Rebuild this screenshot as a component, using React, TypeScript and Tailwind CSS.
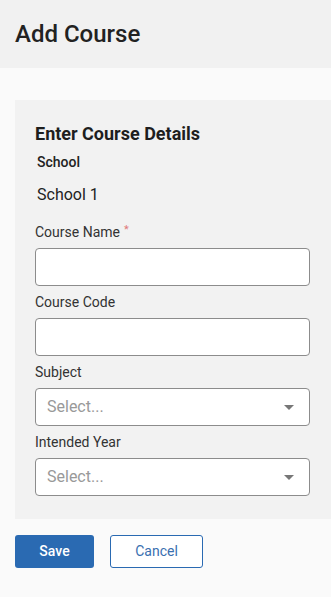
import React from 'react';

const font = { fontFamily: 'Roboto, "Liberation Sans", sans-serif' };

function Field({ label, required, children }: { label: string; required?: boolean; children: React.ReactNode }) {
  return (
    <div className="mb-[6px]">
      <div className="mb-[6px] h-5 text-[14px] leading-5 text-[#333]">
        {label}
        {required && <span className="ml-1 align-top text-[11px] leading-4 text-[#e07a7a]">*</span>}
      </div>
      {children}
    </div>
  );
}

function TextBox() {
  return <input type="text" className="block h-[38px] w-full rounded-[4px] border border-[#8c8c8c] bg-white px-[11px] text-[16px] outline-none" />;
}

function SelectBox() {
  return (
    <div className="flex h-[38px] w-full items-center justify-between rounded-[4px] border border-[#8c8c8c] bg-white pl-[11px] pr-[15px]">
      <span className="text-[16px] text-[#999]">Select...</span>
      <svg width="10" height="5" viewBox="0 0 10 5">
        <path d="M0 0h10L5 5z" fill="#777" />
      </svg>
    </div>
  );
}

export default function App() {
  return (
    <div className="min-h-[597px] bg-[#fafafa]" style={font}>
      {/* Header */}
      <header className="flex h-[68px] items-center bg-[#f1f1f1] px-[15px]">
        <h1 className="text-[24px] font-medium text-[#222]">Add Course</h1>
      </header>

      <main className="pt-8">
        <section className="ml-[15px] bg-[#f2f2f2] pb-[17px] pl-5 pr-[21px] pt-[22px]">
          <h2 className="h-6 text-[18px] font-bold leading-6 text-[#1e1e1e]">Enter Course Details</h2>
          <div className="mt-[7px] h-[18px] pl-[2px] text-[14px] font-medium leading-[18px] text-[#222]">School</div>
          <div className="mt-3 h-6 pl-[2px] text-[16px] leading-6 text-[#222]">School 1</div>

          <div className="mt-[15px]">
            <Field label="Course Name" required>
              <TextBox />
            </Field>
            <Field label="Course Code">
              <TextBox />
            </Field>
            <Field label="Subject">
              <SelectBox />
            </Field>
            <Field label="Intended Year">
              <SelectBox />
            </Field>
          </div>
        </section>

        <div className="mt-4 flex gap-4 px-[15px]">
          <button className="h-[33px] w-[79px] rounded-[3px] bg-[#2a6ab2] text-[14px] font-medium text-white">Save</button>
          <button className="h-[33px] w-[93px] rounded-[3px] border border-[#2a6ab2] bg-white text-[14px] text-[#3a6fb0]">Cancel</button>
        </div>
      </main>
    </div>
  );
}
